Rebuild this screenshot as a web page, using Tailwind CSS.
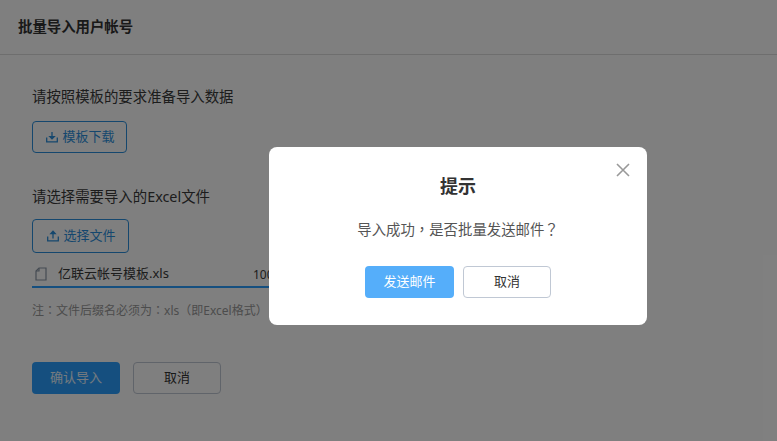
<!DOCTYPE html>
<html lang="zh-CN">
<head>
<meta charset="utf-8">
<title>批量导入用户帐号</title>
<script src="https://cdn.jsdelivr.net/npm/@tailwindcss/browser@4"></script>
</head>
<body class="bg-white">
<div class="relative w-[777px] h-[441px] overflow-hidden bg-white text-[#3a3a3a] text-[14.4px] font-['Noto_Sans','Noto_Sans_CJK_SC',sans-serif]">
  <header class="h-[55px] border-b border-[#ddd] pl-[18px] flex items-center">
    <h1 class="text-[14.4px] font-bold text-[#333]">批量导入用户帐号</h1>
  </header>
  <main class="pl-[32px] pt-[31px]">
    <p class="h-[22px] leading-[22px]">请按照模板的要求准备导入数据</p>
    <button class="mt-[13px] w-[95px] h-[32px] pl-[2px] border border-[#2b8fdc] rounded-[4px] text-[#2b8fdc] text-[13px] flex items-center justify-center gap-[4px]">
      <svg class="w-[12px] h-[12px]" viewBox="0 0 12 12" fill="none" stroke="currentColor" stroke-width="1.3"><path d="M.7 6.5v4.3h10.6V6.5"/><path d="M6 1v6"/><path d="M3.8 5.6 6 7.8l2.2-2.2z" fill="currentColor"/></svg>
      <span>模板下载</span>
    </button>
    <p class="mt-[33px] h-[22px] leading-[22px]">请选择需要导入的Excel文件</p>
    <button class="mt-[11px] w-[97px] h-[34px] pl-[2px] border border-[#2b8fdc] rounded-[4px] text-[#2b8fdc] text-[13px] flex items-center justify-center gap-[4px]">
      <svg class="w-[12px] h-[12px]" viewBox="0 0 12 12" fill="none" stroke="currentColor" stroke-width="1.3"><path d="M.7 6.5v4.3h10.6V6.5"/><path d="M6 8.5V3"/><path d="M3.8 3.7 6 1.3l2.2 2.4z" fill="currentColor"/></svg>
      <span>选择文件</span>
    </button>
    <div class="mt-[8px] w-[260px] h-[27px] border-b-2 border-[#2b9fff] relative flex items-center">
      <svg class="ml-[3px] w-[12px] h-[14px] text-[#8a96a6]" viewBox="0 0 12 14" fill="none" stroke="currentColor" stroke-width="1.2"><path d="M1 13V4l3-3h7v12z"/><path d="M4 1v3H1"/></svg>
      <span class="ml-[11px] text-[13px]">亿联云帐号模板.xls</span>
      <span class="absolute left-[221px] top-[5px] text-[12px]">100%</span>
    </div>
    <p class="mt-[11px] h-[22px] leading-[22px] text-[12px] text-[#999]">注<span lang="zh-Hant" class="font-['Noto_Sans_CJK_TC']">：</span>文件后缀名必须为<span lang="zh-Hant" class="font-['Noto_Sans_CJK_TC']">：</span>xls<span lang="zh-Hant" class="font-['Noto_Sans_CJK_TC']">（</span>即Excel格式<span lang="zh-Hant" class="font-['Noto_Sans_CJK_TC']">）</span></p>
    <div class="mt-[41px] flex gap-[13px] text-[13px]">
      <button class="w-[88px] h-[32px] rounded-[4px] bg-[#2a9fff] text-white/90">确认导入</button>
      <button class="w-[88px] h-[32px] rounded-[4px] border border-[#c0c8d4] text-[#333]">取消</button>
    </div>
  </main>

  <div class="absolute inset-0 bg-black/50"></div>

  <div role="dialog" class="absolute left-[269px] top-[147px] w-[378px] h-[178px] bg-white rounded-[8px]">
    <svg class="absolute right-[17px] top-[16px] w-[14px] h-[14px] text-[#999]" viewBox="0 0 14 14" fill="none" stroke="currentColor" stroke-width="1.6"><path d="M1 1l12 12M13 1 1 13"/></svg>
    <h2 class="pt-[25px] h-[62px] text-center text-[18px] leading-[28px] font-bold text-[#333]">提示</h2>
    <p class="mt-[7px] h-[26px] leading-[26px] text-center text-[14.4px] text-[#555]">导入成功<span lang="zh-Hant" class="font-['Noto_Sans_CJK_TC']">，</span>是否批量发送邮件<span lang="zh-Hant" class="font-['Noto_Sans_CJK_TC']">？</span></p>
    <div class="mt-[24px] flex justify-center gap-[9px] text-[13px]">
      <button class="w-[89px] h-[32px] rounded-[4px] bg-[#55aefa] text-white">发送邮件</button>
      <button class="w-[88px] h-[32px] rounded-[4px] border border-[#c0c8d4] text-[#333]">取消</button>
    </div>
  </div>
</div>
</body>
</html>
